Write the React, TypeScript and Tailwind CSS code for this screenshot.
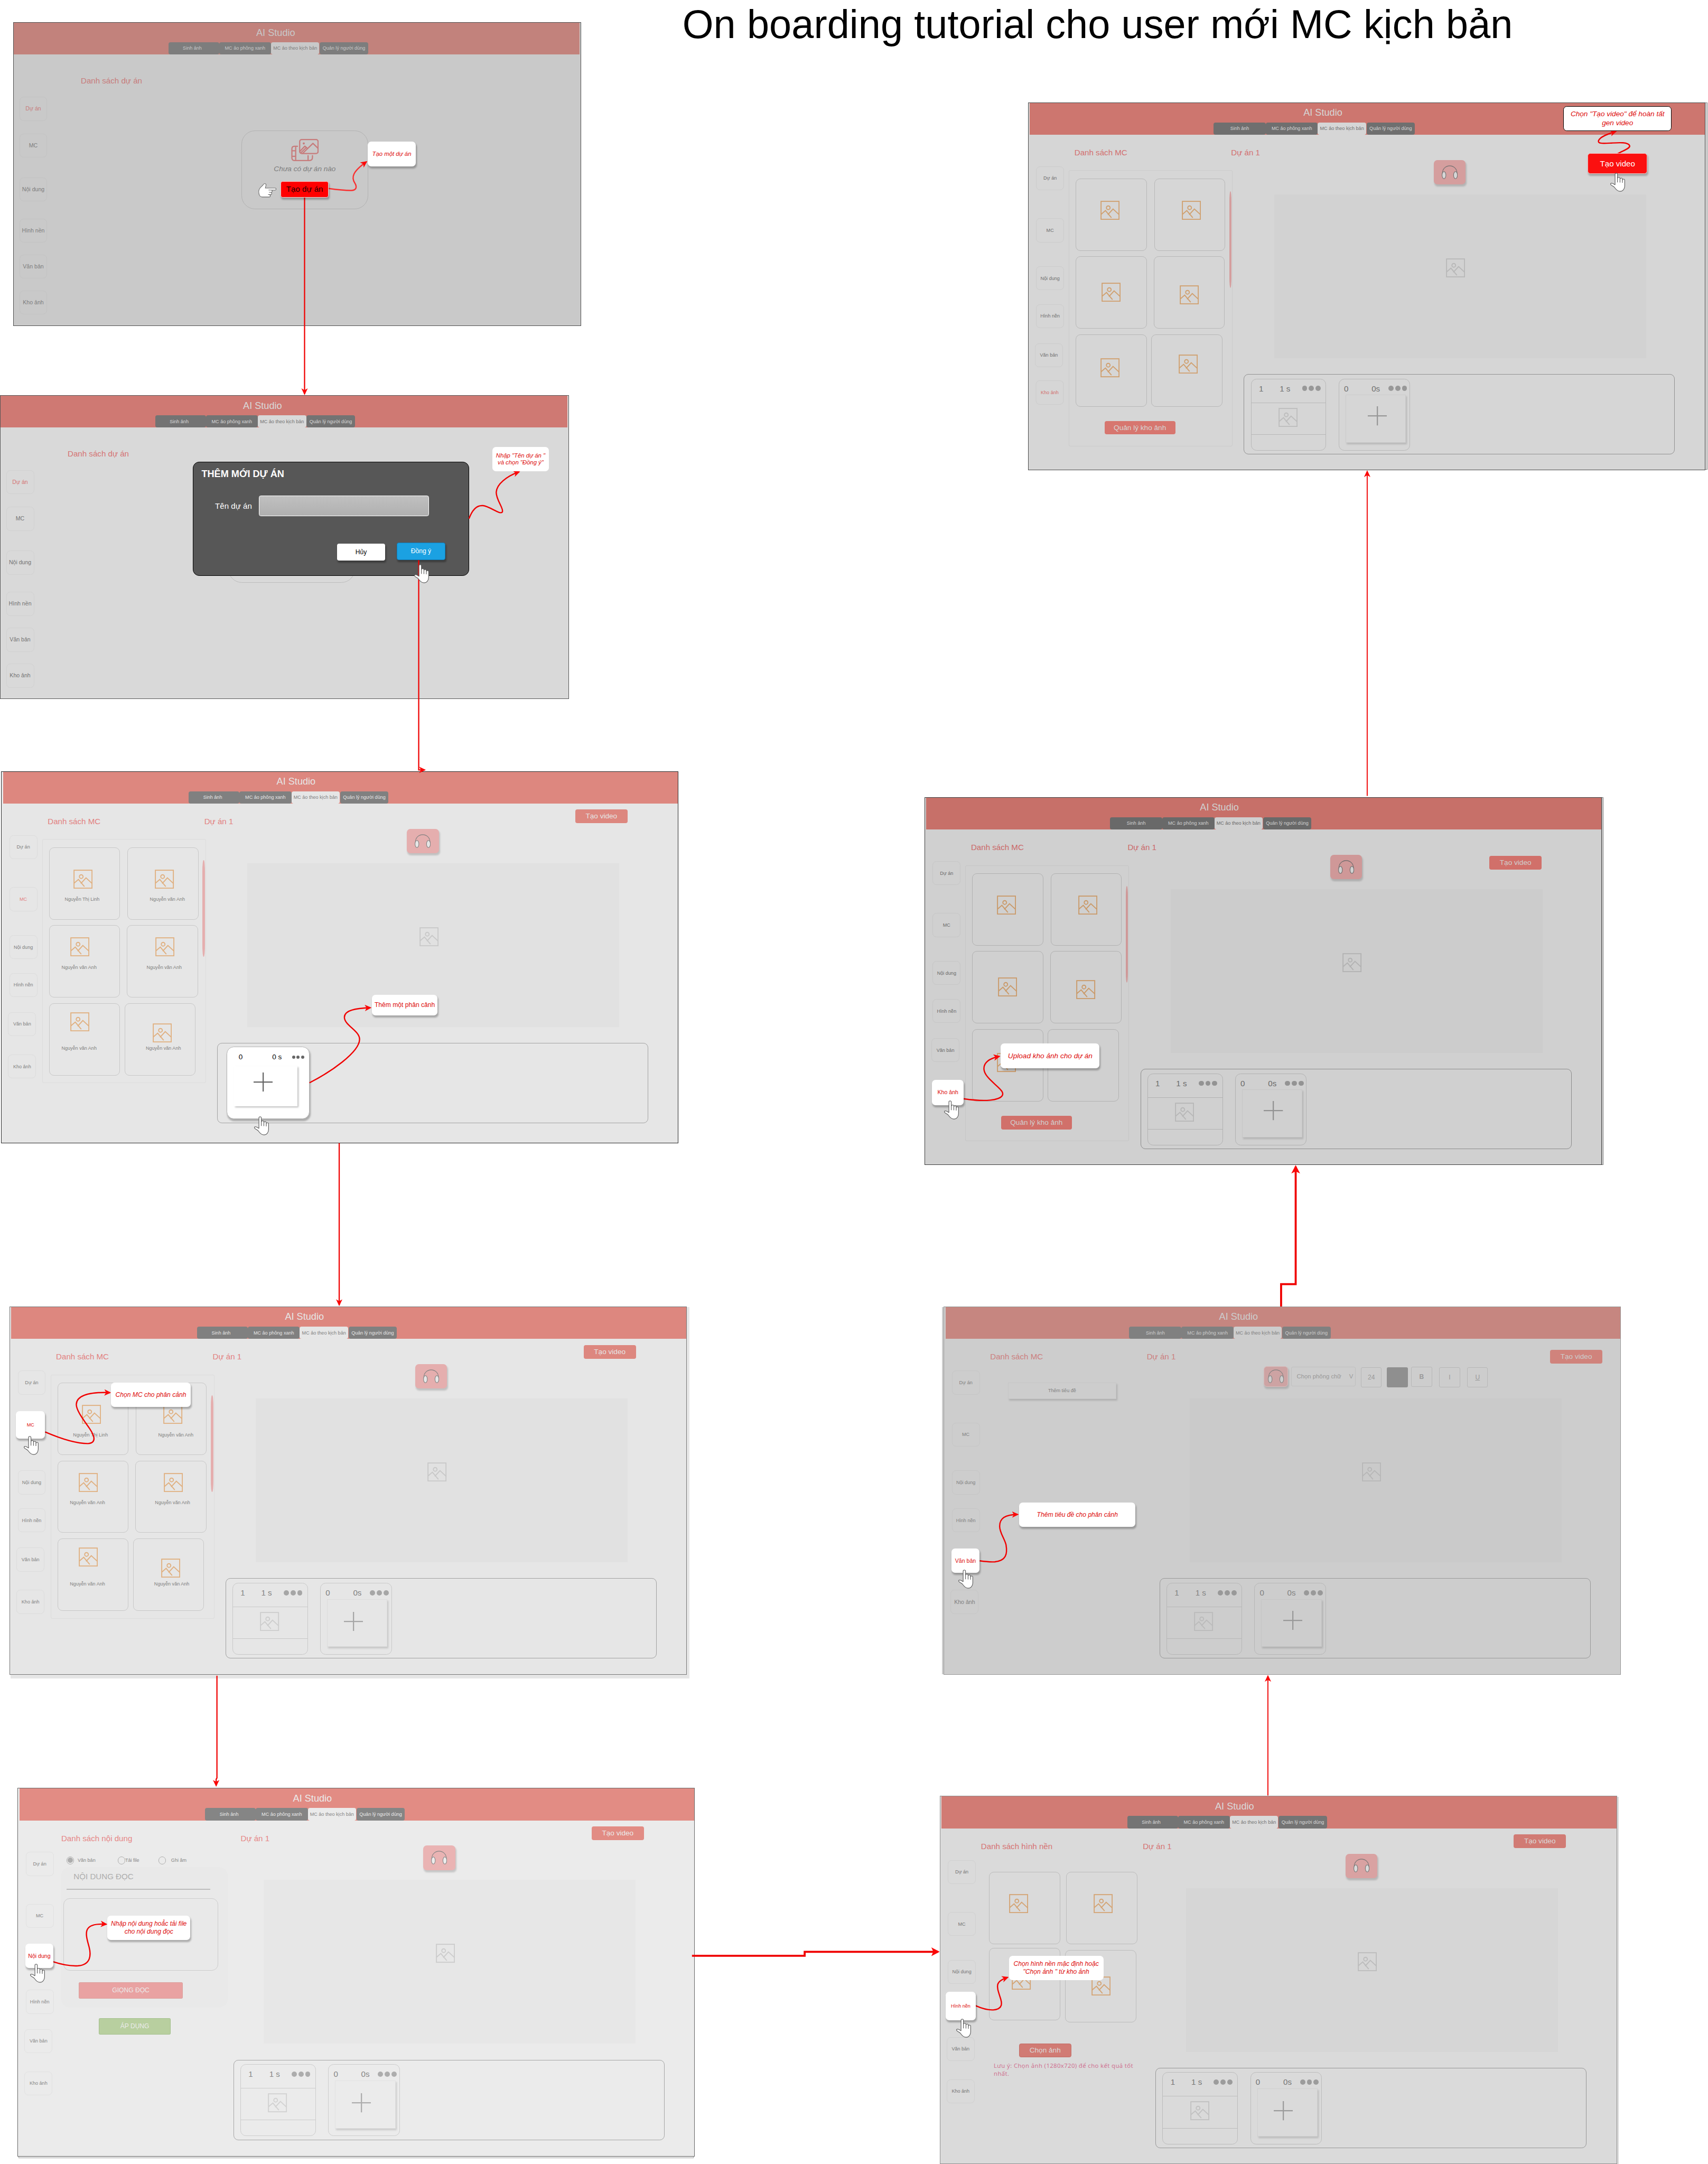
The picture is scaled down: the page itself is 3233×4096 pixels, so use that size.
import React from "react";

type Scene = "empty" | "filled";

/* ---------- icons ---------- */

function PictureIcon({ className = "" }: { className?: string }) {
  return (
    <svg viewBox="0 0 48 48" className={"block h-12 w-12 shrink-0 " + className} fill="none" stroke="currentColor" strokeWidth="2.5">
      <rect x="1.5" y="1.5" width="45" height="45" />
      <circle cx="19.5" cy="17.5" r="4.6" />
      <path d="M1.5 34 12.5 24.5 27.5 42.5M18.5 35 31.5 20.5 46.5 34.5" />
    </svg>
  );
}

function FilmIcon({ className = "" }: { className?: string }) {
  return (
    <svg viewBox="0 0 69 56" className={"block h-14 w-[69px] " + className} fill="none" stroke="currentColor" strokeWidth="3" strokeLinecap="round" strokeLinejoin="round">
      <rect x="21.5" y="1.5" width="46" height="35" rx="5" />
      <circle cx="31.7" cy="11.3" r="2.6" fill="currentColor" stroke="none" />
      <path d="M22 31 34.5 18 40 23M29 36 54.7 11 67 23M24 35 37 22.5" />
      <path d="M16 18.5H8Q2 18.5 2 25V47Q2 54 8 54H46Q53.5 54 53.5 46V42M11.5 19V53M2 29.5H11.5M2 43.5H11.5M42.5 42V53" />
    </svg>
  );
}

function HeadphonesIcon() {
  return (
    <svg viewBox="0 0 40 35" className="block h-[35px] w-10" fill="none" stroke="var(--ink)" strokeWidth="1.4">
      <path d="M1.5 21C1.5 -5.5 38.5 -5.5 38.5 21" />
      <ellipse cx="5.6" cy="24.5" rx="4.8" ry="9" fill="var(--bg)" />
      <ellipse cx="34.4" cy="24.5" rx="4.8" ry="9" fill="var(--bg)" />
    </svg>
  );
}

function PlusIcon({ className = "" }: { className?: string }) {
  return (
    <svg viewBox="0 0 48 48" className={"block h-12 w-12 " + className} fill="none" stroke="currentColor" strokeWidth="3">
      <path d="M24 0V48M0 24H48" />
    </svg>
  );
}

function HandUp({ className }: { className: string }) {
  return (
    <svg viewBox="0 0 38 48" className={"absolute h-12 w-[38px] " + className} fill="#fff" stroke="#5a5a5a" strokeWidth="1.5" strokeLinejoin="round">
      <path d="M12 30V4a3 3 0 0 1 6 0V14a3.2 3 0 0 1 6.4 .5V16a3 3 0 0 1 6 .5V18.5a2.9 2.9 0 0 1 5.8 .5V33C36 41 31 46.5 25 46.5C17 46.5 14 41 11 37C8 33 3 33 1 29C0 26 4 25.5 7 27Z" />
      <path d="M18 14V24M24.4 16V24.5M30.4 18.5V25" fill="none" />
    </svg>
  );
}

function HandRight({ className }: { className: string }) {
  return (
    <svg viewBox="0 0 46 36" className={"absolute h-9 w-[46px] " + className} fill="#fff" stroke="#6a6a6a" strokeWidth="1.4" strokeLinejoin="round">
      <path d="M1 20C2 10 9 9 12.500 3C14.500 -.5 20 1 19.200 4.500L17.500 12H42a2.400 2.400 0 0 1 0 4.800H26H32a2.800 2.800 0 0 1 0 5.700H27H30.500a2.800 2.800 0 0 1 0 5.800H25H27a2.800 2.800 0 0 1 0 5.900H9C2.500 34 1 27 1 20Z" />
    </svg>
  );
}

/* ---------- shared board parts ---------- */

function Header({ offset, titleOffset, wide = false, className = "" }: { offset: string; titleOffset: string; wide?: boolean; className?: string }) {
  const tab = "flex h-full items-center justify-center rounded-[5px] bg-[var(--tab)] text-[var(--bg)]";
  return (
    <div className={"flex h-20 shrink-0 flex-col bg-[var(--head)] " + className}>
      <div className={"flex h-[49px] items-center text-2xl text-[var(--bg)] " + titleOffset}>AI Studio</div>
      <div className={"flex h-[31px] text-xs " + offset}>
        <div className={tab + (wide ? " w-[131px]" : " w-[127px] pr-[7px]")}>Sinh ảnh</div>
        <div className={tab + " w-[130px]"}>MC ảo phông xanh</div>
        <div className="flex h-full w-[121px] items-center justify-center rounded-[5px] bg-[var(--bg)] text-[var(--ink)]">MC ảo theo kịch bản</div>
        <div className={tab + " ml-px w-[121px]"}>Quản lý người dùng</div>
      </div>
    </div>
  );
}

function NavItem({ label, className, active, hidden }: { label: string; className: string; active?: boolean; hidden?: boolean }) {
  return (
    <div
      className={
        "flex h-15 w-[70px] shrink-0 items-center justify-center rounded-[10px] " +
        (hidden ? "" : "border border-[var(--faint)] ") +
        (active ? "text-[var(--red)] " : "text-[var(--ink)] ") +
        className
      }
    >
      {hidden ? "" : label}
    </div>
  );
}

/* ---------- project list board ---------- */

function ProjectBoard({ className }: { className: string }) {
  return (
    <section className={"absolute flex h-[761px] flex-col bg-[var(--bg)] " + className}>
      <Header titleOffset="pl-[607px] pt-[2px]" offset="ml-[387px]" className="mr-[2px]" />
      <div className="flex">
        <nav className="flex w-[168px] flex-col pl-[14px] pt-[106px] text-sm">
          <NavItem label="Dự án" className="" active />
          <NavItem label="MC" className="mt-[32px]" />
          <NavItem label="Nội dung" className="mt-[50px]" />
          <NavItem label="Hình nền" className="mt-[43px]" />
          <NavItem label="Văn bản" className="mt-[30px]" />
          <NavItem label="Kho ảnh" className="mt-[30px]" />
        </nav>
        <main className="flex flex-col">
          <h2 className="mt-[54px] h-6 text-xl leading-6 text-[var(--red)]">Danh sách dự án</h2>
          <div className="ml-[402px] mt-[112px] flex h-[198px] w-[317px] flex-col items-center rounded-[34px] border border-[var(--line)]">
            <FilmIcon className="mt-[20px] text-[var(--red)]" />
            <div className="mt-[8px] text-lg leading-6 text-[var(--ink)] italic">Chưa có dự án nào</div>
          </div>
        </main>
      </div>
    </section>
  );
}

/* ---------- editor board ---------- */

function Sidebar({ active, hidden, lastClass = "mt-[46px]" }: { active?: string; hidden?: string; lastClass?: string }) {
  const items: [string, string][] = [
    ["Dự án", "mt-[79px] ml-[19px]"],
    ["MC", "mt-[70px] ml-[19px]"],
    ["Nội dung", "mt-[60px] ml-[19px]"],
    ["Hình nền", "mt-[35px] ml-[19px]"],
    ["Văn bản", "mt-[38px] ml-[16px]"],
    ["Kho ảnh", "ml-[16px] " + lastClass],
  ];
  return (
    <nav className="flex w-[101px] shrink-0 flex-col text-xs">
      {items.map(([label, cls]) => (
        <NavItem key={label} label={label} className={cls} active={active === label} hidden={hidden === label} />
      ))}
    </nav>
  );
}

function MediaCard({ className = "", icon, name, nameClass = "" }: { className?: string; icon: string; name?: string; nameClass?: string }) {
  return (
    <div className={"flex h-[181px] w-[178px] shrink-0 flex-col items-start rounded-xl border border-[var(--line)] " + className}>
      <PictureIcon className={"text-[var(--pic)] " + icon} />
      {name && <span className={"text-xs leading-4 whitespace-nowrap text-[var(--ink)] " + nameClass}>{name}</span>}
    </div>
  );
}

function McList({ named }: { named: boolean }) {
  return (
    <div className={"mt-8 flex w-[410px] rounded-[4px] border border-[var(--faint)] " + (named ? "h-[611px]" : "h-[691px]")}>
      <div className="flex w-[400px] shrink-0 flex-col pt-[19px] pl-[16px]">
        {named ? (
          <>
            <div className="flex h-[195px]">
              <MediaCard icon="mt-[54px] ml-[60px]" name="Nguyễn Thị Linh" nameClass="mt-[19px] ml-[38px]" />
              <MediaCard className="ml-[18px]" icon="mt-[54px] ml-[68px]" name="Nguyễn văn Anh" nameClass="mt-[19px] ml-[55px]" />
            </div>
            <div className="flex h-[195px]">
              <MediaCard icon="mt-[29px] ml-[52px]" name="Nguyễn văn Anh" nameClass="mt-[19px] ml-[30px]" />
              <MediaCard className="ml-[17px]" icon="mt-[29px] ml-[70px]" name="Nguyễn văn Anh" nameClass="mt-[19px] ml-[48px]" />
            </div>
            <div className="flex">
              <MediaCard icon="mt-[21px] ml-[52px]" name="Nguyễn văn Anh" nameClass="mt-[35px] ml-[30px]" />
              <MediaCard className="ml-[11px]" icon="mt-[49px] ml-[69px]" name="Nguyễn văn Anh" nameClass="mt-[7px] ml-[52px]" />
            </div>
          </>
        ) : (
          <>
            <div className="flex h-[195px]">
              <MediaCard icon="mt-[54px] ml-[60px]" />
              <MediaCard className="ml-[18px]" icon="mt-[54px] ml-[68px]" />
            </div>
            <div className="flex h-[195px]">
              <MediaCard icon="mt-[64px] ml-[63px]" />
              <MediaCard className="ml-[17px]" icon="mt-[71px] ml-[64px]" />
            </div>
            <div className="flex">
              <MediaCard icon="mt-[59px] ml-[60px]" />
              <MediaCard className="ml-[11px]" icon="mt-[49px] ml-[67px]" />
            </div>
            <button className="mt-[36px] ml-[72px] h-[34px] w-[177px] rounded-[5px] bg-[var(--btn)] text-lg leading-[34px] text-[var(--bg)]">Quản lý kho ảnh</button>
          </>
        )}
      </div>
      <div className="mt-[51px] h-[242px] w-[6px] bg-[var(--phone)] [border-radius:50%/12%]" />
    </div>
  );
}

function Radio({ on = false }: { on?: boolean }) {
  return (
    <span className="flex h-[19px] w-[19px] shrink-0 items-center justify-center rounded-full border-2 border-[var(--dot)]">
      {on && <span className="h-[13px] w-[13px] rounded-full bg-[var(--dot)]" />}
    </span>
  );
}

function ContentForm() {
  return (
    <div className="flex flex-col">
      <div className="mt-[33px] flex h-5 items-center pl-[14px] text-xs text-[var(--ink)]">
        <Radio on />
        <span className="ml-[9px] w-[100px]">Văn bản</span>
        <Radio />
        <span className="w-[83px]">Tải file</span>
        <Radio />
        <span className="ml-[13px]">Ghi âm</span>
      </div>
      <div className="mt-[7px] flex h-[352px] w-[419px] flex-col rounded-[24px] bg-[#e9e9e9]">
        <div className="mt-[12px] ml-[32px] text-xl leading-6 text-[var(--dot)]">NỘI DUNG ĐỌC</div>
        <div className="mt-[18px] ml-[14px] h-[2px] w-[360px] bg-[#bdbdbd]" />
        <div className="mt-[22px] ml-[6px] h-[181px] w-[388px] rounded-2xl border border-[var(--line)]" />
        <div className="mt-[29px] ml-[45px] flex h-[41px] w-[260px] items-center justify-center rounded-[3px] border border-[#dba09c] bg-[#e9a2a2] text-base text-[var(--bg)]">GIỌNG ĐỌC</div>
      </div>
      <div className="mt-[26px] ml-[95px] flex h-[41px] w-[180px] items-center justify-center rounded-[3px] border border-[#a3c08c] bg-[#b8cf9f] text-base text-[var(--bg)]">ÁP DỤNG</div>
    </div>
  );
}

function BackgroundList() {
  return (
    <div className="flex flex-col pl-[21px]">
      <div className="mt-[52px] flex h-[190px]">
        <MediaCard icon="mt-[54px] ml-[49px]" />
        <MediaCard className="ml-[15px]" icon="mt-[54px] ml-[67px]" />
      </div>
      <div className="flex">
        <MediaCard icon="mt-[55px] ml-[56px]" />
        <MediaCard className="mt-[5px] ml-[13px]" icon="mt-[65px] ml-[64px]" />
      </div>
      <button className="mt-[54px] ml-[75px] h-[34px] w-[131px] rounded-[5px] border border-[#c26d66] bg-[var(--btn)] text-lg leading-[32px] text-[var(--bg)]">Chọn ảnh</button>
      <p className="mt-[12px] ml-[12px] w-[370px] font-['Noto_Sans',sans-serif] text-[15px] leading-[19px] tracking-[0.5px] text-[#cf7392]">
        Lưu ý: Chọn ảnh (1280x720) để cho kết quả tốt
        <br />
        nhất.
      </p>
    </div>
  );
}

function Dots({ className }: { className: string }) {
  return (
    <div className={"flex gap-1 " + className}>
      <span className="h-[13px] w-[13px] rounded-full bg-[var(--dot)]" />
      <span className="h-[13px] w-[13px] rounded-full bg-[var(--dot)]" />
      <span className="h-[13px] w-[13px] rounded-full bg-[var(--dot)]" />
    </div>
  );
}

function Timeline({ scene, plus }: { scene: Scene; plus: string }) {
  return (
    <div className="mt-[40px] ml-[32px] flex h-[201px] w-[1079px] rounded-xl border border-[var(--frame)]">
      {scene === "filled" && (
        <>
          <div className="mt-[10px] ml-[16px] flex h-[180px] w-[189px] flex-col rounded-[14px] border border-[var(--line)] text-xl leading-6 text-[var(--ink)]">
            <div className="flex h-[58px] pt-[12px] pl-[19px]">
              <span className="w-[52px]">1</span>
              <span className="w-[56px]">1 s</span>
              <Dots className="mt-[5px]" />
            </div>
            <div className="h-[81px] border-y border-[var(--line)] pt-[12px] pl-[68px]">
              <PictureIcon className="text-[var(--line)] opacity-80" />
            </div>
          </div>
          <div className="mt-[10px] ml-[31px] flex h-[180px] w-[179px] flex-col rounded-[14px] border border-[var(--line)] text-xl leading-6 text-[var(--ink)]">
            <div className="flex h-[39px] pt-[12px] pl-[12px]">
              <span className="w-[69px]">0</span>
              <span className="w-[42px]">0s</span>
              <Dots className="mt-[5px]" />
            </div>
            <div className={"ml-[16px] h-[120px] w-[151px] border border-[var(--faint)] shadow-[2px_4px_4px_rgba(0,0,0,0.14)] " + plus}>
              <PlusIcon className="text-[var(--dot)]" />
            </div>
          </div>
        </>
      )}
    </div>
  );
}

function TextToolbar() {
  const box = "flex h-[50px] w-[52px] items-center justify-center rounded-[4px] border border-[var(--line)]";
  return (
    <div className="flex h-[60px] items-start pl-[293px] text-base text-[var(--dot)]">
      <div className="mt-[5px] flex h-[52px] w-15 items-center justify-center rounded-[8px] border border-[#d8bcbc] bg-[var(--phone)] shadow-[2px_4px_4px_rgba(0,0,0,0.14)]">
        <HeadphonesIcon />
      </div>
      <div className="mt-[6px] ml-[9px] flex h-[50px] w-[161px] items-center justify-between rounded-[4px] border-2 border-[#c0c0c0] pr-[5px] pl-[12px] text-[15px]">
        <span>Chọn phông chữ</span>
        <span>V</span>
      </div>
      <div className={box + " mt-[8px] ml-[13px]"}>24</div>
      <div className="mt-[8px] ml-[13px] h-[50px] w-[53px] rounded-[4px] bg-[#8f8f8f]" />
      <div className={box + " mt-[7px] ml-[8px] font-bold"}>B</div>
      <div className={box + " mt-[8px] ml-[18px]"}>I</div>
      <div className={box + " mt-[8px] ml-[18px] underline"}>U</div>
    </div>
  );
}

interface EditorProps {
  className: string;
  heading: string;
  headingClass?: string;
  projectClass?: string;
  videoClass?: string;
  wide?: boolean;
  active?: string;
  hidden?: string;
  lastClass?: string;
  scene?: Scene;
  plus?: string;
  toolbar?: boolean;
  children: React.ReactNode;
}

function EditorBoard({
  className,
  heading,
  headingClass = "pl-[14px]",
  projectClass = "",
  videoClass = "mt-[15px] mr-[126px]",
  wide = false,
  active,
  hidden,
  lastClass,
  scene = "filled",
  plus = "pl-[40px] pt-[31px]",
  toolbar = false,
  children,
}: EditorProps) {
  return (
    <section className={"absolute flex w-[1695px] flex-col border border-[var(--edge)] bg-[var(--bg)] " + className}>
      <Header titleOffset="pl-[685px]" offset={wide ? "ml-[460px]" : "ml-[465px]"} wide={wide} className="ml-[3px]" />
      <div className="flex">
        <Sidebar active={active} hidden={hidden} lastClass={lastClass} />
        <div className="flex w-[406px] shrink-0 flex-col">
          <h2 className={"mt-[33px] h-6 text-xl leading-6 whitespace-nowrap text-[var(--red)] " + headingClass}>{heading}</h2>
          {children}
        </div>
        <main className="flex grow flex-col">
          <div className="flex h-[63px] items-start justify-between">
            <h2 className={"mt-[33px] h-6 text-xl leading-6 text-[var(--red)] " + projectClass}>Dự án 1</h2>
            {videoClass !== "none" && (
              <button className={"h-[34px] w-[131px] rounded-[5px] bg-[var(--btn)] text-lg leading-[34px] text-[var(--bg)] " + videoClass}>Tạo video</button>
            )}
          </div>
          {toolbar ? (
            <TextToolbar />
          ) : (
            <div className="ml-[507px] flex h-[61px] w-20 items-center justify-center rounded-[9px] bg-[var(--phone)] shadow-[2px_4px_4px_rgba(0,0,0,0.16)]">
              <HeadphonesIcon />
            </div>
          )}
          <div className={"ml-[108px] h-[410px] w-[931px] bg-[var(--view)] pt-[160px] pl-[430px] " + (toolbar ? "mt-[26px]" : "mt-[25px]")}>
            <PictureIcon className="text-[var(--line)]" />
          </div>
          <Timeline scene={scene} plus={plus} />
        </main>
      </div>
    </section>
  );
}

/* ---------- overlays ---------- */

function Callout({ className, flat = false, children }: { className: string; flat?: boolean; children: React.ReactNode }) {
  return (
    <div
      className={
        "absolute flex items-center justify-center rounded-[9px] bg-white text-center whitespace-nowrap text-[#dd0a0a] " +
        (flat ? "" : "shadow-[2px_4px_4px_rgba(0,0,0,0.26)] ") +
        className
      }
    >
      {children}
    </div>
  );
}

function NewProjectDialog() {
  return (
    <div className="absolute top-[1156px] left-[482px] flex h-[285px] w-[692px] flex-col rounded-2xl border border-black bg-[#575757] text-white">
      <h3 className="mt-[14px] ml-[21px] text-2xl leading-[30px] font-bold">THÊM MỚI DỰ ÁN</h3>
      <div className="mt-[39px] flex items-center pl-[55px] text-xl">
        <span className="mt-[2px] w-[109px]">Tên dự án</span>
        <div className="h-[51px] w-[427px] rounded-[5px] border border-white bg-linear-to-b from-[#c0c0c0] to-[#b0b0b0]" />
      </div>
      <div className="mt-[67px] flex pl-[360px] text-base">
        <button className="mt-[2px] h-[43px] w-[121px] rounded-[5px] bg-white text-black shadow-[2px_4px_4px_rgba(0,0,0,0.3)]">Hủy</button>
        <button className="ml-[29px] h-[43px] w-[121px] rounded-[5px] border border-[#0f7fbd] bg-[#1ba1e2] shadow-[2px_4px_4px_rgba(0,0,0,0.3)]">Đồng ý</button>
      </div>
    </div>
  );
}

function NewSceneCard() {
  return (
    <div className="absolute top-[2620px] left-[567px] flex h-[181px] w-[208px] flex-col rounded-[18px] border border-[#b5b5b5] bg-white text-lg leading-6 text-black shadow-[2px_4px_4px_rgba(0,0,0,0.26)]">
      <div className="flex h-[47px] items-center pl-[29px] pt-[3px]">
        <span className="w-[84px]">0</span>
        <span className="w-[50px]">0 s</span>
        <div className="flex gap-[3px]">
          <span className="h-2 w-2 rounded-full bg-[#666]" />
          <span className="h-2 w-2 rounded-full bg-[#666]" />
          <span className="h-2 w-2 rounded-full bg-[#666]" />
        </div>
      </div>
      <div className="ml-[18px] h-[101px] w-[158px] bg-white pt-[16px] pl-[48px] shadow-[2px_3px_4px_rgba(0,0,0,0.26)]">
        <PlusIcon className="text-[#666]" />
      </div>
    </div>
  );
}

function Connectors() {
  return (
    <svg viewBox="0 0 4275 5416" className="pointer-events-none absolute top-0 left-0 h-[5416px] w-[4275px]" fill="none" stroke="#f00000" strokeWidth="3">
      <defs>
        <marker id="tip" markerUnits="userSpaceOnUse" markerWidth="20" markerHeight="20" refX="14" refY="8" orient="auto">
          <path d="M0 0 17 8 0 16 4.500 8Z" fill="#fb0707" stroke="none" />
        </marker>
        <marker id="bigtip" markerUnits="userSpaceOnUse" markerWidth="26" markerHeight="26" refX="17" refY="11" orient="auto">
          <path d="M0 0 21 11 0 22 5 11Z" fill="#fb0707" stroke="none" />
        </marker>
      </defs>
      <path d="M762.300 494V986" markerEnd="url(#tip)" />
      <path d="M1048 1402V1927H1063" markerEnd="url(#tip)" />
      <path d="M849 2861V3266" markerEnd="url(#tip)" />
      <path d="M543 4194V4450L541 4453V4469" markerEnd="url(#tip)" />
      <path d="M3173.500 4494V4195" strokeWidth="2.5" markerEnd="url(#tip)" />
      <path d="M3422 1992V1180" strokeWidth="2.5" markerEnd="url(#tip)" />
      <path d="M1732 4895H2014V4885H2348" strokeWidth="5" markerEnd="url(#bigtip)" />
      <path d="M3206.500 3270V3214H3243V2920" strokeWidth="5" markerEnd="url(#bigtip)" />

      <g strokeWidth="3.2">
        <path d="M822.700 471.700C850 475.500 868 477 880 476.700C894 475.500 893 466 888 458C879 444 882 430 917 405" stroke="#f93030" markerEnd="url(#tip)" />
        <path d="M1174 1298C1182 1276 1194 1264 1209 1265.500C1228 1268 1252 1290 1257.500 1281C1261 1272 1242 1252 1242 1232C1243 1212 1268 1192 1299 1181" markerEnd="url(#tip)" />
        <path d="M774.600 2710C826 2684 900 2634 900 2601C900 2580 862 2566 862 2546C862 2528 890 2524 927 2522" markerEnd="url(#tip)" />
        <path d="M113 3584C150 3600 190 3613 220 3613C245 3611 234 3590 224 3575C208 3552 191 3530 191 3515C192 3490 230 3484 275 3485.600" markerEnd="url(#tip)" />
        <path d="M133 4910C160 4919 180 4921 196 4920C228 4917 228 4892 223 4873C214 4840 204 4812 266 4816" markerEnd="url(#tip)" />
        <path d="M2412 2750C2440 2754 2462 2755 2478 2753.500C2512 2750 2515 2738 2504 2727C2492 2713 2462 2694 2462.700 2674C2463 2656 2482 2648 2501 2644" markerEnd="url(#tip)" />
        <path d="M4048.700 385C4062 377 4080 372 4079 365C4076 355 4050 357 4034 358C4010 359 3999 360 4001 352C4005 342 4025 335 4044 329" markerEnd="url(#tip)" />
        <path d="M2452 3906.500C2470 3909 2482 3909.500 2490 3909C2518 3906 2522 3890 2518 3866C2514 3850 2502 3836 2502 3820C2502 3800 2515 3791 2547 3790.400" markerEnd="url(#tip)" />
        <path d="M2442 5020C2460 5028 2475 5031 2486 5030.500C2512 5028 2508 5012 2503 4998C2494 4970 2490 4960 2522 4949" markerEnd="url(#tip)" />
      </g>
    </svg>
  );
}

export default function App() {
  return (
    <div className="h-[4096px] w-[3233px] overflow-hidden bg-white">
      <div className="relative h-[5416px] w-[4275px] bg-white font-['Liberation_Sans',Arial,sans-serif] [zoom:0.75626]">
        <h1 className="absolute top-[4px] left-[1708px] text-[100px] leading-[115px] tracking-[0.15px] whitespace-nowrap text-black">On boarding tutorial cho user mới MC kịch bản</h1>

        <ProjectBoard className="top-[55px] left-[33px] w-[1421px] border border-[#4d4d4d] [--bg:#c9c9c9] [--faint:#c3c3c3] [--head:#c2827c] [--ink:#7d7d7d] [--line:#b2b2b2] [--red:#c77c7c] [--tab:#7d7d7d]" />
        <ProjectBoard className="top-[989px] left-0 w-[1424px] border-2 border-r border-[#555] [--bg:#d9d9d9] [--faint:#d1d1d1] [--head:#cf7973] [--ink:#737373] [--line:#bdbdbd] [--red:#d57373] [--tab:#737373]" />

        <EditorBoard
          className="top-[1930px] left-[3px] h-[931px] [--bg:#e6e6e6] [--btn:#dd877f] [--dot:#9f9f9f] [--edge:#2a2a2a] [--faint:#dcdcdc] [--frame:#a3a3a3] [--head:#dd877f] [--ink:#808080] [--line:#c8c8c8] [--phone:#e5aeae] [--pic:#e0b080] [--red:#e28080] [--tab:#808080] [--view:#e1e1e1]"
          heading="Danh sách MC"
          active="MC"
          scene="empty"
        >
          <McList named />
        </EditorBoard>

        <div className="absolute top-[3271px] left-[26px] h-[930px] w-[1700px] bg-[#e6e6e6]" />
        <EditorBoard
          className="top-[3270px] left-[24px] h-[922px] [--bg:#e6e6e6] [--btn:#dd877f] [--dot:#a6a6a6] [--edge:#777777] [--faint:#dcdcdc] [--frame:#a0a0a0] [--head:#dd877f] [--ink:#808080] [--line:#c8c8c8] [--phone:#e5aeae] [--pic:#e0b080] [--red:#e28080] [--tab:#808080] [--view:#e1e1e1]"
          heading="Danh sách MC"
          hidden="MC"
        >
          <McList named />
        </EditorBoard>

        <div className="absolute top-[4476px] left-[46px] h-[926px] w-[1690px] border border-[#aaa] bg-[#ebebeb]" />
        <EditorBoard
          className="top-[4475px] left-[44px] h-[922px] [--bg:#ebebeb] [--btn:#e28c84] [--dot:#adadad] [--edge:#666666] [--faint:#e1e1e1] [--frame:#a5a5a5] [--head:#e28c84] [--ink:#858585] [--line:#cccccc] [--phone:#eab3b3] [--pic:#e0b080] [--red:#e68686] [--tab:#858585] [--view:#e7e7e7]"
          heading="Danh sách nội dung"
          headingClass="pl-[7px]"
          projectClass="ml-[50px]"
          hidden="Nội dung"
        >
          <div className="ml-[6px]">
            <ContentForm />
          </div>
        </EditorBoard>

        <div className="absolute top-[1995px] left-[2318px] h-[921px] w-[1695px] border border-[#777] bg-[#d0d0d0]" />
        <EditorBoard
          className="top-[1995px] left-[2314px] h-[921px] [--bg:#d0d0d0] [--btn:#d1706a] [--dot:#939393] [--edge:#3a3a3a] [--faint:#c6c6c6] [--frame:#8c8c8c] [--head:#c77069] [--ink:#696969] [--line:#b2b2b2] [--phone:#cf9898] [--pic:#ca9a69] [--red:#cb6868] [--tab:#696969] [--view:#cccccc]"
          heading="Danh sách MC"
          wide
          hidden="Kho ảnh"
          videoClass="mt-[66px] mr-[149px]"
          plus="pl-[53px] pt-[28px]"
        >
          <McList named={false} />
        </EditorBoard>

        <div className="absolute top-[257px] left-[2578px] h-[918px] w-[1696px] border border-[#888] bg-[#d6d6d6]" />
        <EditorBoard
          className="top-[256px] left-[2573px] h-[921px] [--bg:#d6d6d6] [--btn:#d7766f] [--dot:#989898] [--edge:#4a4a4a] [--faint:#cccccc] [--frame:#929292] [--head:#cd766f] [--ink:#6f6f6f] [--line:#b8b8b8] [--phone:#d59e9e] [--pic:#d0a06f] [--red:#d26f6f] [--tab:#6f6f6f] [--view:#d2d2d2]"
          heading="Danh sách MC"
          wide
          active="Kho ảnh"
          lastClass="mt-[33px] translate-x-[2px]"
          videoClass="none"
          plus="pl-[54px] pt-[28px]"
        >
          <McList named={false} />
        </EditorBoard>

        <div className="absolute top-[3271px] left-[2358px] h-[920px] w-4 bg-[#cdcdcd]" />
        <EditorBoard
          className="top-[3270px] left-[2362px] h-[922px] [--bg:#cdcdcd] [--btn:#d0837c] [--dot:#999999] [--edge:#979797] [--faint:#c6c6c6] [--frame:#999999] [--head:#c68680] [--ink:#808080] [--line:#b7b7b7] [--phone:#cda3a3] [--pic:#ca9a69] [--red:#cc7f7f] [--tab:#808080] [--view:#cacaca]"
          heading="Danh sách MC"
          wide
          hidden="Văn bản"
          lastClass="mt-[46px] text-sm"
          videoClass="mt-[27px] mr-[45px]"
          plus="pl-[53px] pt-[28px]"
          toolbar
        >
          <div className="mt-[52px] ml-[58px] flex h-[41px] w-[272px] items-center justify-center border border-[var(--faint)] text-xs text-[var(--ink)] shadow-[2px_4px_4px_rgba(0,0,0,0.14)]">Thêm tiêu đề</div>
        </EditorBoard>

        <div className="absolute top-[4497px] left-[2360px] h-[919px] w-[1692px] bg-[#dadada]" />
        <EditorBoard
          className="top-[4495px] left-[2352px] h-[921px] [--bg:#dadada] [--btn:#d17b74] [--dot:#9c9c9c] [--edge:#8f8f8f] [--faint:#d0d0d0] [--frame:#979797] [--head:#d17b74] [--ink:#747474] [--line:#bcbcbc] [--phone:#d9a2a2] [--pic:#d4a474] [--red:#d67373] [--tab:#747474] [--view:#d6d6d6]"
          heading="Danh sách hình nền"
          headingClass="pl-px"
          hidden="Hình nền"
        >
          <BackgroundList />
        </EditorBoard>

        <NewProjectDialog />
        <NewSceneCard />
        <Connectors />

        <Callout className="top-[355px] left-[920px] h-[61px] w-[121px] text-[15px] italic">Tạo một dự án</Callout>
        <div className="absolute top-[453px] left-[702px] flex h-[41px] w-[121px] items-center justify-center rounded-[6px] border border-[#f8cecc] bg-[#ff0000] text-xl text-[#1a0000] shadow-[2px_4px_4px_rgba(0,0,0,0.26)]">Tạo dự án</div>
        <HandRight className="top-[459px] left-[646px]" />

        <Callout flat className="top-[1119px] left-[1232px] h-[61px] w-[142px] text-[15px] leading-[18px] italic">
          Nhập "Tên dự án "<br />và chọn "Đồng ý"
        </Callout>
        <HandUp className="top-[1412px] left-[1037px]" />

        <Callout className="top-[2490px] left-[931px] h-[51px] w-[164px] text-base">Thêm một phân cảnh</Callout>
        <HandUp className="top-[2794px] left-[636px]" />

        <Callout className="top-[3532px] left-[40px] h-[69px] w-[73px] text-xs">MC</Callout>
        <Callout className="top-[3460px] left-[278px] h-[61px] w-[199px] text-base italic">Chọn MC cho phân cảnh</Callout>
        <HandUp className="top-[3594px] left-[60px]" />

        <Callout className="top-[4865px] left-[64px] h-[61px] w-[69px] text-sm">Nội dung</Callout>
        <Callout className="top-[4795px] left-[269px] h-[61px] w-[207px] text-base leading-5 italic">
          Nhập nội dung hoẳc tải file
          <br />
          cho nội dung đọc
        </Callout>
        <HandUp className="top-[4915px] left-[76px]" />

        <Callout className="top-[2703px] left-[2333px] h-[63px] w-[79px] text-sm">Kho ảnh</Callout>
        <Callout className="top-[2612px] left-[2505px] h-[62px] w-[247px] text-lg italic">Upload kho ảnh cho dự án</Callout>
        <HandUp className="top-[2755px] left-[2363px]" />

        <Callout flat className="top-[266px] left-[3913px] h-[62px] w-[271px] border border-black text-lg leading-[22px] italic">
          Chọn "Tạo video" để hoàn tất
          <br />
          gen video
        </Callout>
        <div className="absolute top-[384px] left-[3974px] flex h-[51px] w-[149px] items-center justify-center rounded-[7px] border border-[#f3b5b5] bg-[#fb1010] text-xl text-white shadow-[2px_4px_4px_rgba(0,0,0,0.22)]">Tạo video</div>
        <HandUp className="top-[433px] left-[4030px]" />

        <Callout className="top-[3876px] left-[2381px] h-[61px] w-[71px] text-sm">Văn bản</Callout>
        <Callout className="top-[3760px] left-[2551px] h-[61px] w-[291px] text-base italic">Thêm tiêu đề cho phân cảnh</Callout>
        <HandUp className="top-[3929px] left-[2398px]" />

        <Callout className="top-[4985px] left-[2367px] h-[71px] w-[75px] text-xs">Hình nền</Callout>
        <Callout flat className="top-[4895px] left-[2525px] h-[61px] w-[237px] text-base leading-5 italic">
          Chọn hình nền mặc định hoặc
          <br />
          "Chọn ảnh " từ kho ảnh
        </Callout>
        <HandUp className="top-[5052px] left-[2394px]" />
      </div>
    </div>
  );
}
